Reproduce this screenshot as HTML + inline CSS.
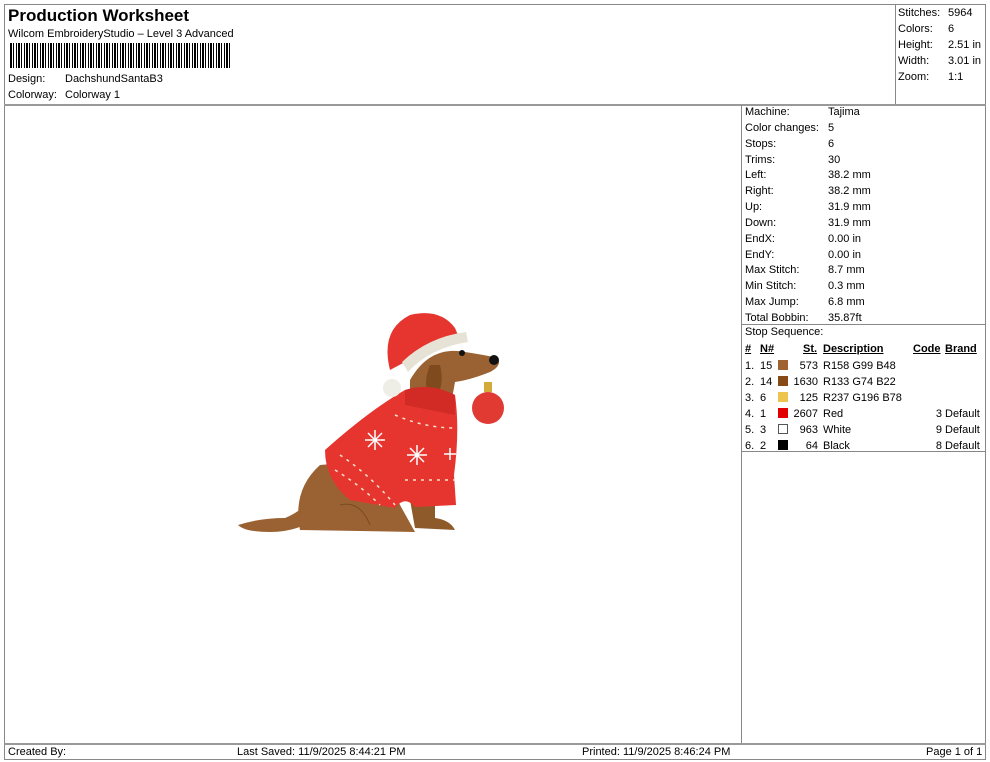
<!DOCTYPE html>
<html><head><meta charset="utf-8"><style>
*{margin:0;padding:0;box-sizing:border-box}
body{width:990px;height:762px;background:#fff;font-family:"Liberation Sans",Arial,sans-serif;font-size:11px;color:#000;position:relative;overflow:hidden}
.a{position:absolute;white-space:nowrap}
.ln{position:absolute;background:#888}
.sw{display:inline-block;width:10px;height:10px;vertical-align:-1px}
</style></head><body>
<div class="ln" style="left:4px;top:4px;width:982px;height:1px"></div>
<div class="ln" style="left:4px;top:4px;width:1px;height:756px"></div>
<div class="ln" style="left:985px;top:4px;width:1px;height:756px"></div>
<div class="ln" style="left:4px;top:759px;width:982px;height:1px"></div>
<div class="ln" style="left:4px;top:104px;width:982px;height:2px;background:#999"></div>
<div class="ln" style="left:895px;top:4px;width:1px;height:100px"></div>
<div class="ln" style="left:741px;top:105px;width:1px;height:639px"></div>
<div class="ln" style="left:741px;top:324px;width:245px;height:1px"></div>
<div class="ln" style="left:741px;top:451px;width:245px;height:1px"></div>
<div class="ln" style="left:4px;top:743px;width:982px;height:2px;background:#999"></div>

<div class="a" style="left:8px;top:6px;font-size:17px;font-weight:bold">Production Worksheet</div>
<div class="a" style="left:8px;top:28px">Wilcom EmbroideryStudio – Level 3 Advanced</div>
<div class="a" style="left:10px;top:43px;width:220px;height:25px;background:repeating-linear-gradient(90deg,#000 0 2px,#fff 2px 3px,#000 3px 4px,#fff 4px 6px,#000 6px 7px,#fff 7px 8px)"></div>
<div class="a" style="left:8px;top:73px">Design:</div><div class="a" style="left:65px;top:73px">DachshundSantaB3</div>
<div class="a" style="left:8px;top:89px">Colorway:</div><div class="a" style="left:65px;top:89px">Colorway 1</div>

<div class="a" style="left:898px;top:5px;line-height:16px">Stitches:<br>Colors:<br>Height:<br>Width:<br>Zoom:</div>
<div class="a" style="left:948px;top:5px;line-height:16px">5964<br>6<br>2.51 in<br>3.01 in<br>1:1</div>

<div class="a" style="left:745px;top:105px;line-height:15.85px">Machine:<br>Color changes:<br>Stops:<br>Trims:<br>Left:<br>Right:<br>Up:<br>Down:<br>EndX:<br>EndY:<br>Max Stitch:<br>Min Stitch:<br>Max Jump:<br>Total Bobbin:</div>
<div class="a" style="left:828px;top:105px;line-height:15.85px">Tajima<br>5<br>6<br>30<br>38.2 mm<br>38.2 mm<br>31.9 mm<br>31.9 mm<br>0.00 in<br>0.00 in<br>8.7 mm<br>0.3 mm<br>6.8 mm<br>35.87ft</div>

<div class="a" style="left:745px;top:326px">Stop Sequence:</div>
<div class="a" style="left:745px;top:343px;font-weight:bold;text-decoration:underline">#</div>
<div class="a" style="left:760px;top:343px;font-weight:bold;text-decoration:underline">N#</div>
<div class="a" style="left:803px;top:343px;font-weight:bold;text-decoration:underline">St.</div>
<div class="a" style="left:823px;top:343px;font-weight:bold;text-decoration:underline">Description</div>
<div class="a" style="left:913px;top:343px;font-weight:bold;text-decoration:underline">Code</div>
<div class="a" style="left:945px;top:343px;font-weight:bold;text-decoration:underline">Brand</div>
<div class="a" style="left:745px;top:359px;line-height:15.9px">1.<br>2.<br>3.<br>4.<br>5.<br>6.</div>
<div class="a" style="left:760px;top:359px;line-height:15.9px">15<br>14<br>6<br>1<br>3<br>2</div>
<div class="a" style="left:778px;top:359px;line-height:15.9px">
<span class="sw" style="background:#9e6330"></span><br><span class="sw" style="background:#854a16"></span><br><span class="sw" style="background:#edc44e"></span><br><span class="sw" style="background:#e00000"></span><br><span class="sw" style="border:1px solid #555"></span><br><span class="sw" style="background:#000"></span></div>
<div class="a" style="left:788px;top:359px;width:30px;text-align:right;line-height:15.9px">573<br>1630<br>125<br>2607<br>963<br>64</div>
<div class="a" style="left:823px;top:359px;line-height:15.9px">R158 G99 B48<br>R133 G74 B22<br>R237 G196 B78<br>Red<br>White<br>Black</div>
<div class="a" style="left:920px;top:359px;width:22px;text-align:right;line-height:15.9px"><br><br><br>3<br>9<br>8</div>
<div class="a" style="left:945px;top:359px;line-height:15.9px"><br><br><br>Default<br>Default<br>Default</div>

<svg class="a" style="left:230px;top:300px" width="290" height="250" viewBox="0 0 290 250">
<path d="M8 225 Q30 218 55 218 Q70 212 80 200 L90 215 Q70 232 40 232 Q15 232 8 225Z" fill="#9a6232"/>
<path d="M70 230 Q62 190 90 165 L150 160 L170 205 L185 232 Z" fill="#9a6232"/>
<path d="M110 205 Q130 200 140 225" stroke="#7a4a20" fill="none"/>
<path d="M180 200 L185 228 L225 230 Q220 220 205 218 L205 200Z" fill="#8f5a2a"/>
<path d="M180 80 Q200 45 235 52 Q255 55 268 58 Q272 66 260 72 Q240 80 225 82 L220 110 L180 110Z" fill="#9a6232"/>
<path d="M200 65 Q190 90 205 100 Q215 85 210 65Z" fill="#7e4a1e"/>
<circle cx="264" cy="60" r="5" fill="#111"/>
<circle cx="232" cy="53" r="3" fill="#111"/>
<path d="M95 150 Q140 110 175 90 Q200 82 225 95 Q230 130 224 175 L226 205 L185 207 Q175 195 165 208 L120 200 Q95 180 95 150Z" fill="#e5352e"/>
<path d="M175 90 Q200 82 225 95 L225 115 Q200 110 175 105Z" fill="#d22a25"/>
<path d="M110 155 Q140 175 165 205 M105 170 Q130 185 150 205" stroke="#f6e2d0" stroke-width="1.5" fill="none" stroke-dasharray="3 5"/>
<path d="M165 115 Q195 128 225 128" stroke="#f6e2d0" stroke-width="1.5" fill="none" stroke-dasharray="3 5"/>
<path d="M175 180 L225 180" stroke="#f6e2d0" stroke-width="1.5" fill="none" stroke-dasharray="3 5"/>
<g stroke="#fff" stroke-width="1.5"><path d="M145 130 v20 M135 140 h20 M138 133 l14 14 M152 133 l-14 14"/><path d="M187 145 v20 M177 155 h20 M180 148 l14 14 M194 148 l-14 14"/><path d="M220 148 v12 M214 154 h12"/></g>
<rect x="254" y="82" width="8" height="10" fill="#d4aa3a"/>
<circle cx="258" cy="108" r="16" fill="#e03a32"/>
<path d="M160 70 Q150 30 180 15 Q210 8 225 28 L230 40 Q195 40 175 62Z" fill="#e5352e"/>
<path d="M172 62 Q198 37 236 32 L238 42 Q200 48 178 72Z" fill="#e6e3d6"/>
<circle cx="162" cy="88" r="9" fill="#eeeee6"/>
</svg>

<div class="a" style="left:8px;top:746px">Created By:</div>
<div class="a" style="left:237px;top:746px">Last Saved: 11/9/2025 8:44:21 PM</div>
<div class="a" style="left:582px;top:746px">Printed: 11/9/2025 8:46:24 PM</div>
<div class="a" style="left:926px;top:746px">Page 1 of 1</div>
</body></html>
